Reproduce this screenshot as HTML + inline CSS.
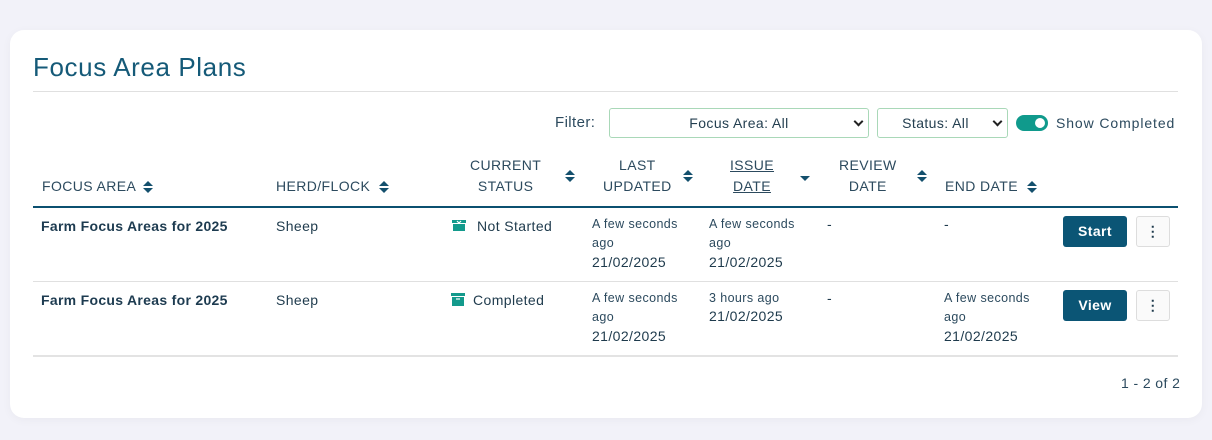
<!DOCTYPE html>
<html><head><style>
*{margin:0;padding:0;box-sizing:border-box}
body{width:1212px;height:440px;background:#f2f2f9;font-family:"Liberation Sans",sans-serif;color:#1e3a4c;position:relative;overflow:hidden;letter-spacing:.4px}
.card{position:absolute;left:10px;top:30px;width:1192px;height:388px;background:#fff;border-radius:14px;box-shadow:0 2px 10px rgba(0,0,0,.04)}
.a{position:absolute;white-space:nowrap}
h1{position:absolute;left:23px;top:22px;font-size:26px;font-weight:400;color:#155a78;letter-spacing:.6px}
.hr{position:absolute;left:23px;right:24px;height:1px;background:#e0e0e0}
.th{font-size:14px;color:#2c4a5e;text-align:center;line-height:21px}
.sort{position:absolute;width:10px}
.sort:before{content:"";position:absolute;left:0;top:0;border:5px solid transparent;border-bottom:5px solid #14506d;border-top:0}
.sort:after{content:"";position:absolute;left:0;top:7px;border:5px solid transparent;border-top:5px solid #14506d;border-bottom:0}
.down:before{display:none}.down:after{top:0;border-width:5px 5px 0}
.b{font-weight:700;font-size:14px;color:#1d3b50;letter-spacing:.3px}
.t{font-size:14px}
.s{font-size:12.5px;line-height:19px;color:#2c4a5e}
.d{font-size:14px;color:#1e3a4c}
.btn{position:absolute;width:64px;height:31px;background:#0b5575;color:#fff;border-radius:3px;font-weight:700;font-size:14px;text-align:center;line-height:31px}
.k{position:absolute;width:34px;height:31px;border:1px solid #ddd;border-radius:3px;background:#fafafa;text-align:center;font-weight:700;line-height:28px;font-size:14px}
.sel{position:absolute;height:30px;border:1px solid #a9d8b8;border-radius:3px;font-size:14px;color:#243f50;text-align:center;line-height:28px}
.sel i{position:absolute;right:6px;top:9px;width:7px;height:7px;border-right:2px solid #222;border-bottom:2px solid #222;transform:rotate(45deg)}
</style></head><body>
<div class="card">
<h1>Focus Area Plans</h1>
<div class="hr" style="top:61px"></div>
<div class="a" style="left:545px;top:84px;font-size:15px;color:#2c4a5e">Filter:</div>
<div class="sel" style="left:599px;top:78px;width:260px">Focus Area: All<i></i></div>
<div class="sel" style="left:867px;top:78px;width:131px;padding-right:14px">Status: All<i></i></div>
<div class="a" style="left:1006px;top:85px;width:32px;height:16px;border-radius:8px;background:#109a8c"><div style="position:absolute;right:3px;top:3px;width:10px;height:10px;border-radius:50%;background:#fff"></div></div>
<div class="a" style="left:1046px;top:85px;font-size:14px;color:#2c4a5e;letter-spacing:.9px">Show Completed</div>

<div class="a th" style="left:32px;top:146px">FOCUS AREA</div><div class="sort" style="left:133px;top:151px"></div>
<div class="a th" style="left:266px;top:146px">HERD/FLOCK</div><div class="sort" style="left:369px;top:151px"></div>
<div class="a th" style="left:460px;top:125px">CURRENT<br>STATUS</div><div class="sort" style="left:555px;top:140px"></div>
<div class="a th" style="left:593px;top:125px">LAST<br>UPDATED</div><div class="sort" style="left:673px;top:140px"></div>
<div class="a th" style="left:720px;top:125px;text-decoration:underline">ISSUE<br>DATE</div><div class="sort down" style="left:790px;top:146px"></div>
<div class="a th" style="left:829px;top:125px">REVIEW<br>DATE</div><div class="sort" style="left:907px;top:140px"></div>
<div class="a th" style="left:935px;top:146px">END DATE</div><div class="sort" style="left:1017px;top:151px"></div>
<div class="hr" style="top:176px;height:2px;background:#0b5070"></div>

<div class="a b" style="left:31px;top:188px">Farm Focus Areas for 2025</div>
<div class="a t" style="left:266px;top:188px">Sheep</div>
<svg class="a" style="left:441px;top:189px" width="16" height="13" viewBox="0 0 16 13"><path d="M1 1h14v3H1z M2 5h12v7H2z" fill="#139a8c"/><path d="M6 2l2 2 2-2" stroke="#fff" stroke-width="1.2" fill="none"/></svg>
<div class="a t" style="left:467px;top:188px">Not Started</div>
<div class="a s" style="left:582px;top:185px">A few seconds<br>ago</div>
<div class="a d" style="left:582px;top:224px">21/02/2025</div>
<div class="a s" style="left:699px;top:185px">A few seconds<br>ago</div>
<div class="a d" style="left:699px;top:224px">21/02/2025</div>
<div class="a t" style="left:817px;top:186px">-</div>
<div class="a t" style="left:934px;top:186px">-</div>
<div class="btn" style="left:1053px;top:186px">Start</div>
<div class="k" style="left:1126px;top:186px">⋮</div>
<div class="hr" style="top:251px"></div>

<div class="a b" style="left:31px;top:262px">Farm Focus Areas for 2025</div>
<div class="a t" style="left:266px;top:262px">Sheep</div>
<svg class="a" style="left:441px;top:263px" width="14" height="13" viewBox="0 0 14 13"><path d="M0 0h14v3H0z M1 4h12v9H1z" fill="#139a8c"/><path d="M5 6h4" stroke="#fff" stroke-width="1.2"/></svg>
<div class="a t" style="left:463px;top:262px">Completed</div>
<div class="a s" style="left:582px;top:259px">A few seconds<br>ago</div>
<div class="a d" style="left:582px;top:298px">21/02/2025</div>
<div class="a s" style="left:699px;top:259px">3 hours ago</div>
<div class="a d" style="left:699px;top:278px">21/02/2025</div>
<div class="a t" style="left:817px;top:260px">-</div>
<div class="a s" style="left:934px;top:259px">A few seconds<br>ago</div>
<div class="a d" style="left:934px;top:298px">21/02/2025</div>
<div class="btn" style="left:1053px;top:260px">View</div>
<div class="k" style="left:1126px;top:260px">⋮</div>
<div class="hr" style="top:325px;height:2px;background:#e3e3e3"></div>
<div class="a" style="left:1111px;top:345px;font-size:14px;color:#2c4a5e">1 - 2 of 2</div>
</div>
</body></html>
